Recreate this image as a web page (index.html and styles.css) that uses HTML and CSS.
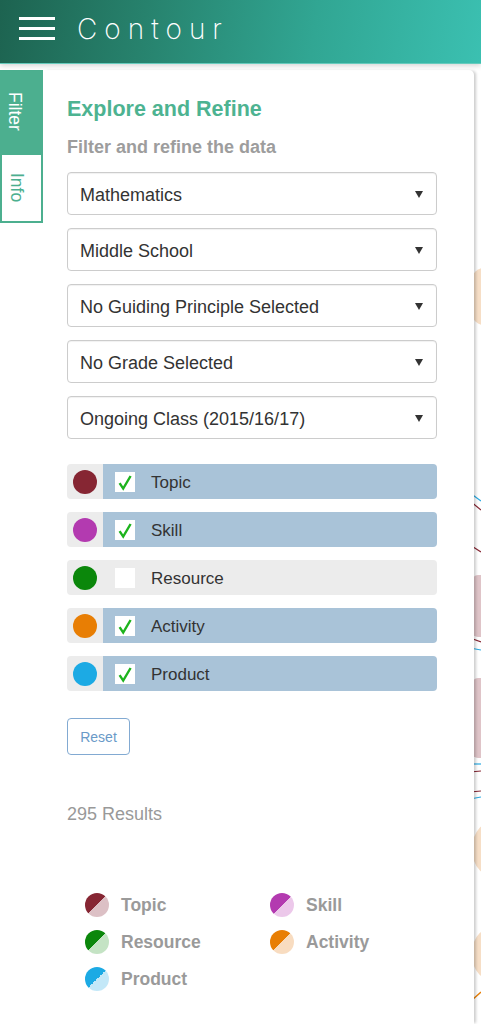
FILE: index.html
```html
<!DOCTYPE html>
<html lang="en">
<head>
<meta charset="utf-8">
<title>Contour</title>
<link rel="stylesheet" href="styles.css">
</head>
<body>
<header class="topbar">
  <button class="menu" aria-label="Menu"><span></span><span></span><span></span></button>
  <h1 class="brand">Contour</h1>
</header>
<main class="stage">
  <svg class="viz" width="481" height="960" viewBox="0 0 481 960" aria-hidden="true">
    <rect x="472" y="204" width="40" height="57" rx="12" fill="#f6dec6"/>
    <line x1="470" y1="429" x2="481" y2="437" stroke="#29aae2" stroke-width="1.2"/>
    <line x1="470" y1="437" x2="481" y2="446" stroke="#862633" stroke-width="1.2"/>
    <line x1="470" y1="481" x2="481" y2="488" stroke="#862633" stroke-width="1.2"/>
    <rect x="472" y="511" width="40" height="62" rx="6" fill="#dfc4c8"/>
    <line x1="470" y1="574" x2="481" y2="578" stroke="#862633" stroke-width="1.2"/>
    <line x1="470" y1="584" x2="481" y2="586" stroke="#29aae2" stroke-width="1.2"/>
    <rect x="472" y="614" width="40" height="80" rx="6" fill="#dfc4c8"/>
    <line x1="470" y1="700" x2="481" y2="700" stroke="#29aae2" stroke-width="1.2"/>
    <line x1="470" y1="708" x2="481" y2="707" stroke="#862633" stroke-width="1.2"/>
    <line x1="470" y1="728" x2="481" y2="727" stroke="#862633" stroke-width="1.2"/>
    <line x1="470" y1="735" x2="481" y2="733" stroke="#29aae2" stroke-width="1.2"/>
    <rect x="472" y="756" width="50" height="58" rx="28" fill="#f6dec6"/>
    <rect x="472" y="862" width="50" height="56" rx="26" fill="#f6dec6"/>
    <line x1="472" y1="936" x2="481" y2="928" stroke="#e87e04" stroke-width="1.4"/>
  </svg>
  <div class="sidebar">
    <nav class="tabs">
      <div class="tab tab-active"><span>Filter</span></div>
      <div class="tab"><span>Info</span></div>
    </nav>
    <section class="panel">
      <h2 class="title">Explore and Refine</h2>
      <p class="subtitle">Filter and refine the data</p>
      <div class="selects">
        <div class="select"><span>Mathematics</span><i class="caret"></i></div>
        <div class="select"><span>Middle School</span><i class="caret"></i></div>
        <div class="select"><span>No Guiding Principle Selected</span><i class="caret"></i></div>
        <div class="select"><span>No Grade Selected</span><i class="caret"></i></div>
        <div class="select"><span>Ongoing Class (2015/16/17)</span><i class="caret"></i></div>
      </div>
      <div class="toggles">
        <div class="toggle">
          <div class="swatch"><span class="dot topic"></span></div>
          <div class="bar"><span class="box"><svg class="tick" viewBox="0 0 20 20"><path d="M4.6 11.2 L8.2 16.6 L15.6 4"/></svg></span><span>Topic</span></div>
        </div>
        <div class="toggle">
          <div class="swatch"><span class="dot skill"></span></div>
          <div class="bar"><span class="box"><svg class="tick" viewBox="0 0 20 20"><path d="M4.6 11.2 L8.2 16.6 L15.6 4"/></svg></span><span>Skill</span></div>
        </div>
        <div class="toggle toggle-off">
          <div class="swatch"><span class="dot resource"></span></div>
          <div class="bar"><span class="box"></span><span>Resource</span></div>
        </div>
        <div class="toggle">
          <div class="swatch"><span class="dot activity"></span></div>
          <div class="bar"><span class="box"><svg class="tick" viewBox="0 0 20 20"><path d="M4.6 11.2 L8.2 16.6 L15.6 4"/></svg></span><span>Activity</span></div>
        </div>
        <div class="toggle">
          <div class="swatch"><span class="dot product"></span></div>
          <div class="bar"><span class="box"><svg class="tick" viewBox="0 0 20 20"><path d="M4.6 11.2 L8.2 16.6 L15.6 4"/></svg></span><span>Product</span></div>
        </div>
      </div>
      <button class="reset">Reset</button>
      <p class="results">295 Results</p>
      <ul class="legend">
        <li><span class="pie pie-topic"></span>Topic</li>
        <li><span class="pie pie-skill"></span>Skill</li>
        <li><span class="pie pie-resource"></span>Resource</li>
        <li><span class="pie pie-activity"></span>Activity</li>
        <li><span class="pie pie-product"></span>Product</li>
      </ul>
    </section>
  </div>
</main>
</body>
</html>
```

FILE: styles.css
```css
* { box-sizing: border-box; }

html, body {
  margin: 0;
  padding: 0;
}

body {
  width: 481px;
  height: 1024px;
  overflow: hidden;
  background: #fff;
  font-family: "Liberation Sans", Arial, sans-serif;
  color: #333;
}

.topbar {
  position: relative;
  z-index: 2;
  height: 64px;
  display: flex;
  align-items: flex-start;
  padding: 17px 0 0 19px;
  background: linear-gradient(100deg, #1d6350 0%, #27826d 30%, #31a693 65%, #3bc0b1 100%);
  border-bottom: 1px solid #66cbbd;
  box-shadow: 0 2px 5px rgba(0, 0, 0, 0.16);
}

.menu {
  width: 36px;
  height: 23px;
  padding: 0;
  border: 0;
  background: none;
  display: flex;
  flex-direction: column;
  justify-content: space-between;
}

.menu span {
  display: block;
  height: 3px;
  width: 36px;
  background: #fff;
}

.brand {
  margin: 0 0 0 22px;
  font-family: Inter, "Open Sans", sans-serif;
  font-weight: 200;
  font-size: 28px;
  line-height: 24px;
  letter-spacing: 7px;
  color: #fff;
}

.stage {
  position: relative;
  height: 960px;
}

.viz {
  position: absolute;
  left: 0;
  top: 0;
}

.sidebar {
  position: relative;
  display: flex;
  height: 100%;
  padding-top: 6px;
}

.tabs {
  width: 43px;
  display: flex;
  flex-direction: column;
}

.tab {
  height: 70px;
  display: flex;
  align-items: center;
  padding-left: 5px;
  border: 2px solid #4caf8f;
  color: #4caf8f;
  background: #fff;
  font-size: 17.5px;
}

.tab-active {
  height: 83px;
  border: 0;
  padding-left: 5px;
  background: #4caf8f;
  color: #fff;
}

.tab span {
  writing-mode: vertical-rl;
  line-height: 20px;
}

.panel {
  width: 431px;
  background: #fff;
  border-radius: 0 5px 0 0;
  box-shadow: 3px 0 3px -1px rgba(0, 0, 0, 0.2);
  padding: 27px 37px 0 24px;
}

.title {
  margin: 0;
  font-size: 21.5px;
  line-height: 24px;
  font-weight: bold;
  color: #4db391;
}

.subtitle {
  margin: 15px 0 14px;
  font-size: 18px;
  line-height: 22px;
  font-weight: bold;
  color: #9d9d9d;
}

.selects {
  display: flex;
  flex-direction: column;
  gap: 13px;
}

.select {
  height: 43px;
  display: flex;
  align-items: center;
  justify-content: space-between;
  padding: 3px 13px 0 12px;
  border: 1px solid #cccccc;
  border-radius: 4px;
  box-shadow: inset 0 1px 1px rgba(0, 0, 0, 0.06);
  font-size: 18px;
  color: #333;
}

.caret {
  width: 0;
  height: 0;
  margin-top: -2px;
  border-left: 4.5px solid transparent;
  border-right: 4.5px solid transparent;
  border-top: 7px solid #333;
}

.toggles {
  margin-top: 25px;
  display: flex;
  flex-direction: column;
  gap: 13px;
}

.toggle {
  height: 35px;
  display: flex;
}

.swatch {
  width: 36px;
  background: #ececec;
  border-radius: 4px 0 0 4px;
  display: flex;
  align-items: center;
  justify-content: center;
}

.dot {
  width: 24px;
  height: 24px;
  border-radius: 50%;
}

.topic { background: #862633; }
.skill { background: #b33ab0; }
.resource { background: #0b870b; }
.activity { background: #e87e04; }
.product { background: #1caae4; }

.bar {
  flex: 1;
  display: flex;
  align-items: center;
  gap: 16px;
  padding-left: 12px;
  background: #a9c3d8;
  border-radius: 0 4px 4px 0;
  font-size: 17px;
  color: #333;
}

.bar > span:last-child {
  padding-top: 2px;
}

.toggle-off .bar {
  background: #ececec;
}

.box {
  width: 20px;
  height: 20px;
  background: #fff;
  display: flex;
}

.tick {
  width: 20px;
  height: 20px;
}

.tick path {
  fill: none;
  stroke: #1db31d;
  stroke-width: 2.4;
  stroke-linejoin: miter;
}

.reset {
  display: block;
  margin-top: 27px;
  width: 63px;
  height: 37px;
  padding: 0;
  border: 1px solid #82aad2;
  border-radius: 4px;
  background: #fff;
  color: #6a9ac8;
  font-family: "Liberation Sans", Arial, sans-serif;
  font-size: 14px;
}

.results {
  margin: 48px 0 0;
  font-size: 18px;
  line-height: 22px;
  color: #999;
}

.legend {
  list-style: none;
  margin: 68px 0 0;
  padding: 0 0 0 18px;
  display: grid;
  grid-template-columns: 185px 1fr;
  row-gap: 13px;
}

.legend li {
  display: flex;
  align-items: center;
  gap: 12px;
  height: 24px;
  font-size: 17.5px;
  font-weight: bold;
  color: #9a9a9a;
}

.pie {
  width: 24px;
  height: 24px;
  border-radius: 50%;
  flex: none;
}

.pie-topic { background: linear-gradient(135deg, #862633 50%, #dcc0c5 50%); }
.pie-skill { background: linear-gradient(135deg, #b33ab0 50%, #ecc8ea 50%); }
.pie-resource { background: linear-gradient(135deg, #0b870b 50%, #c4e3c4 50%); }
.pie-activity { background: linear-gradient(135deg, #e87e04 50%, #f8dcc0 50%); }
.pie-product { background: linear-gradient(135deg, #1caae4 50%, #c3e8f8 50%); }
```
